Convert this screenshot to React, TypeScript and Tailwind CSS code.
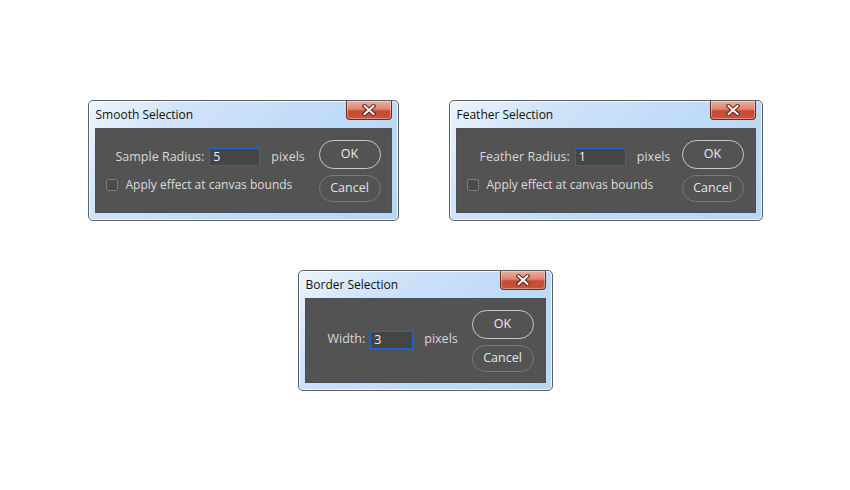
import React from 'react';

const font = { fontFamily: '"Open Sans", "Noto Sans", sans-serif' };

const CloseButton: React.FC = () => (
    <div className="absolute top-0 right-[6px] w-[46px] h-[19px] rounded-b-[4px] border border-t-0 border-[#6e2a1f] bg-[linear-gradient(to_bottom,#ebb0a3_0%,#dd8670_45%,#c94a33_55%,#c7543b_100%)] shadow-[inset_0_0_0_1px_rgba(255,255,255,0.35)] flex items-center justify-center">
        <svg width="14" height="12" viewBox="0 0 14 12">
            <path d="M2.5 2 L11.5 10 M11.5 2 L2.5 10" stroke="#5a1d14" strokeWidth="4" strokeLinecap="square" />
            <path d="M2.5 2 L11.5 10 M11.5 2 L2.5 10" stroke="#ffffff" strokeWidth="2" strokeLinecap="square" />
        </svg>
    </div>
);

interface DialogProps {
    title: string;
    width: string;
    children: React.ReactNode;
}

const Dialog: React.FC<DialogProps> = ({ title, width, children }) => (
    <div
        className={`relative ${width} h-[121px] rounded-[5px] border border-[#57606b] bg-[linear-gradient(135deg,#eef5fd_0%,#cfe3f9_25%,#c0dbf7_60%,#b9d6f4_100%)] shadow-[inset_0_0_0_1px_rgba(255,255,255,0.75)] flex flex-col`}
        style={font}
    >
        <div className="h-[27px] flex items-center pl-[7px] text-[12px] text-[#111]">{title}</div>
        <CloseButton />
        <div className="flex-1 mx-[6px] mb-[7px] bg-[#535353] border border-[#4a4f55] flex justify-between">
            {children}
        </div>
    </div>
);

const Input: React.FC<{ value: string; w: string }> = ({ value, w }) => (
    <div className={`${w} h-[18px] border border-[#2466c4] bg-[#454545] text-[#f0f0f0] text-[12.5px] leading-[16px] pl-[3px]`}>
        {value}
    </div>
);

const Buttons: React.FC<{ pr: string }> = ({ pr }) => (
    <div className={`flex flex-col pt-[11px] ${pr} gap-[6px]`}>
        <div className="w-[62px] h-[29px] rounded-full border-[1.5px] border-[#c9c9c9] flex items-center justify-center text-[12.5px] text-[#ececec]">
            OK
        </div>
        <div className="w-[62px] h-[27px] rounded-full border border-[#787878] flex items-center justify-center text-[12.5px] text-[#e4e4e4]">
            Cancel
        </div>
    </div>
);

const Checkbox: React.FC<{ pl: string }> = ({ pl }) => (
    <div className={`flex items-center h-[18px] mt-[10px] ${pl} gap-[8px]`}>
        <div className="w-[12px] h-[12px] rounded-[2px] border border-[#7c7c7c] bg-[#4b4b4b]" />
        <span className="text-[12px] text-[#dcdcdc]">Apply effect at canvas bounds</span>
    </div>
);

const Row: React.FC<{ label: string; value: string; pl: string; w?: string }> = ({ label, value, pl, w = 'w-[51px]' }) => (
    <div className={`flex items-center h-[18px] ${pl}`}>
        <span className="text-[12.5px] text-[#d8d8d8] mr-[5px]">{label}</span>
        <Input value={value} w={w} />
        <span className="text-[12.5px] text-[#d8d8d8] ml-[11px]">pixels</span>
    </div>
);

export default function App() {
    return (
        <div className="w-[850px] h-[490px] bg-white flex flex-col items-center pt-[100px] gap-[49px]">
            <div className="flex gap-[50px]">
                <Dialog title="Smooth Selection" width="w-[311px]">
                    <div className="flex flex-col pt-[19px]">
                        <Row label="Sample Radius:" value="5" pl="pl-[20px]" />
                        <Checkbox pl="pl-[10px]" />
                    </div>
                    <Buttons pr="pr-[10px]" />
                </Dialog>
                <Dialog title="Feather Selection" width="w-[314px]">
                    <div className="flex flex-col pt-[19px]">
                        <Row label="Feather Radius:" value="1" pl="pl-[23px]" />
                        <Checkbox pl="pl-[10px]" />
                    </div>
                    <Buttons pr="pr-[11px]" />
                </Dialog>
            </div>
            <div>
                <Dialog title="Border Selection" width="w-[255px]">
                    <div className="flex items-center pb-[2px]">
                        <Row label="Width:" value="3" pl="pl-[22px]" w="w-[43px]" />
                    </div>
                    <Buttons pr="pr-[11px]" />
                </Dialog>
            </div>
        </div>
    );
}
